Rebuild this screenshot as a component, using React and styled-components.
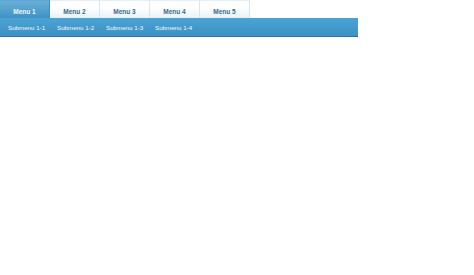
import React from "react";
import styled, { createGlobalStyle } from "styled-components";

const Global = createGlobalStyle`
  html, body { margin: 0; padding: 0; background: #fff; }
  body { font-family: "Liberation Sans", Arial, sans-serif; }
`;

const Nav = styled.nav`
  width: 358px;
`;

const Tabs = styled.ul`
  display: flex;
  list-style: none;
  margin: 0;
  padding: 0;
  height: 18px;
`;

const Tab = styled.li`
  width: 50px;
  height: 18px;
  box-sizing: border-box;
  display: flex;
  align-items: center;
  justify-content: center;
  font-size: 6.5px;
  font-weight: bold;
  color: ${(p) => (p.$active ? "#eef6fb" : "#3a6a8e")};
  background: ${(p) =>
    p.$active
      ? "linear-gradient(#6aaed6, #3f93c6)"
      : "linear-gradient(#ffffff 40%, #e6f2f9)"};
  border-right: 1px solid ${(p) => (p.$active ? "#3d8fc2" : "#d3e6f2")};
  border-top: 1px solid ${(p) => (p.$active ? "#5aa6d4" : "#e3eff7")};
  padding-top: 4px;
`;

const SubBar = styled.ul`
  display: flex;
  list-style: none;
  margin: 0;
  padding: 0 0 0 8px;
  height: 19px;
  box-sizing: border-box;
  align-items: center;
  background: linear-gradient(#4ba3d4, #3d91c5);
  border-bottom: 1px solid #2b74a6;
`;

const SubItem = styled.li`
  width: 49px;
  font-size: 6.2px;
  color: #f4f9fc;
`;

export default function App() {
  const menus = ["Menu 1", "Menu 2", "Menu 3", "Menu 4", "Menu 5"];
  const subs = ["Submenu 1-1", "Submenu 1-2", "Submenu 1-3", "Submenu 1-4"];
  return (
    <>
      <Global />
      <Nav>
        <Tabs>
          {menus.map((m, i) => (
            <Tab key={m} $active={i === 0}>
              {m}
            </Tab>
          ))}
        </Tabs>
        <SubBar>
          {subs.map((s) => (
            <SubItem key={s}>{s}</SubItem>
          ))}
        </SubBar>
      </Nav>
    </>
  );
}
